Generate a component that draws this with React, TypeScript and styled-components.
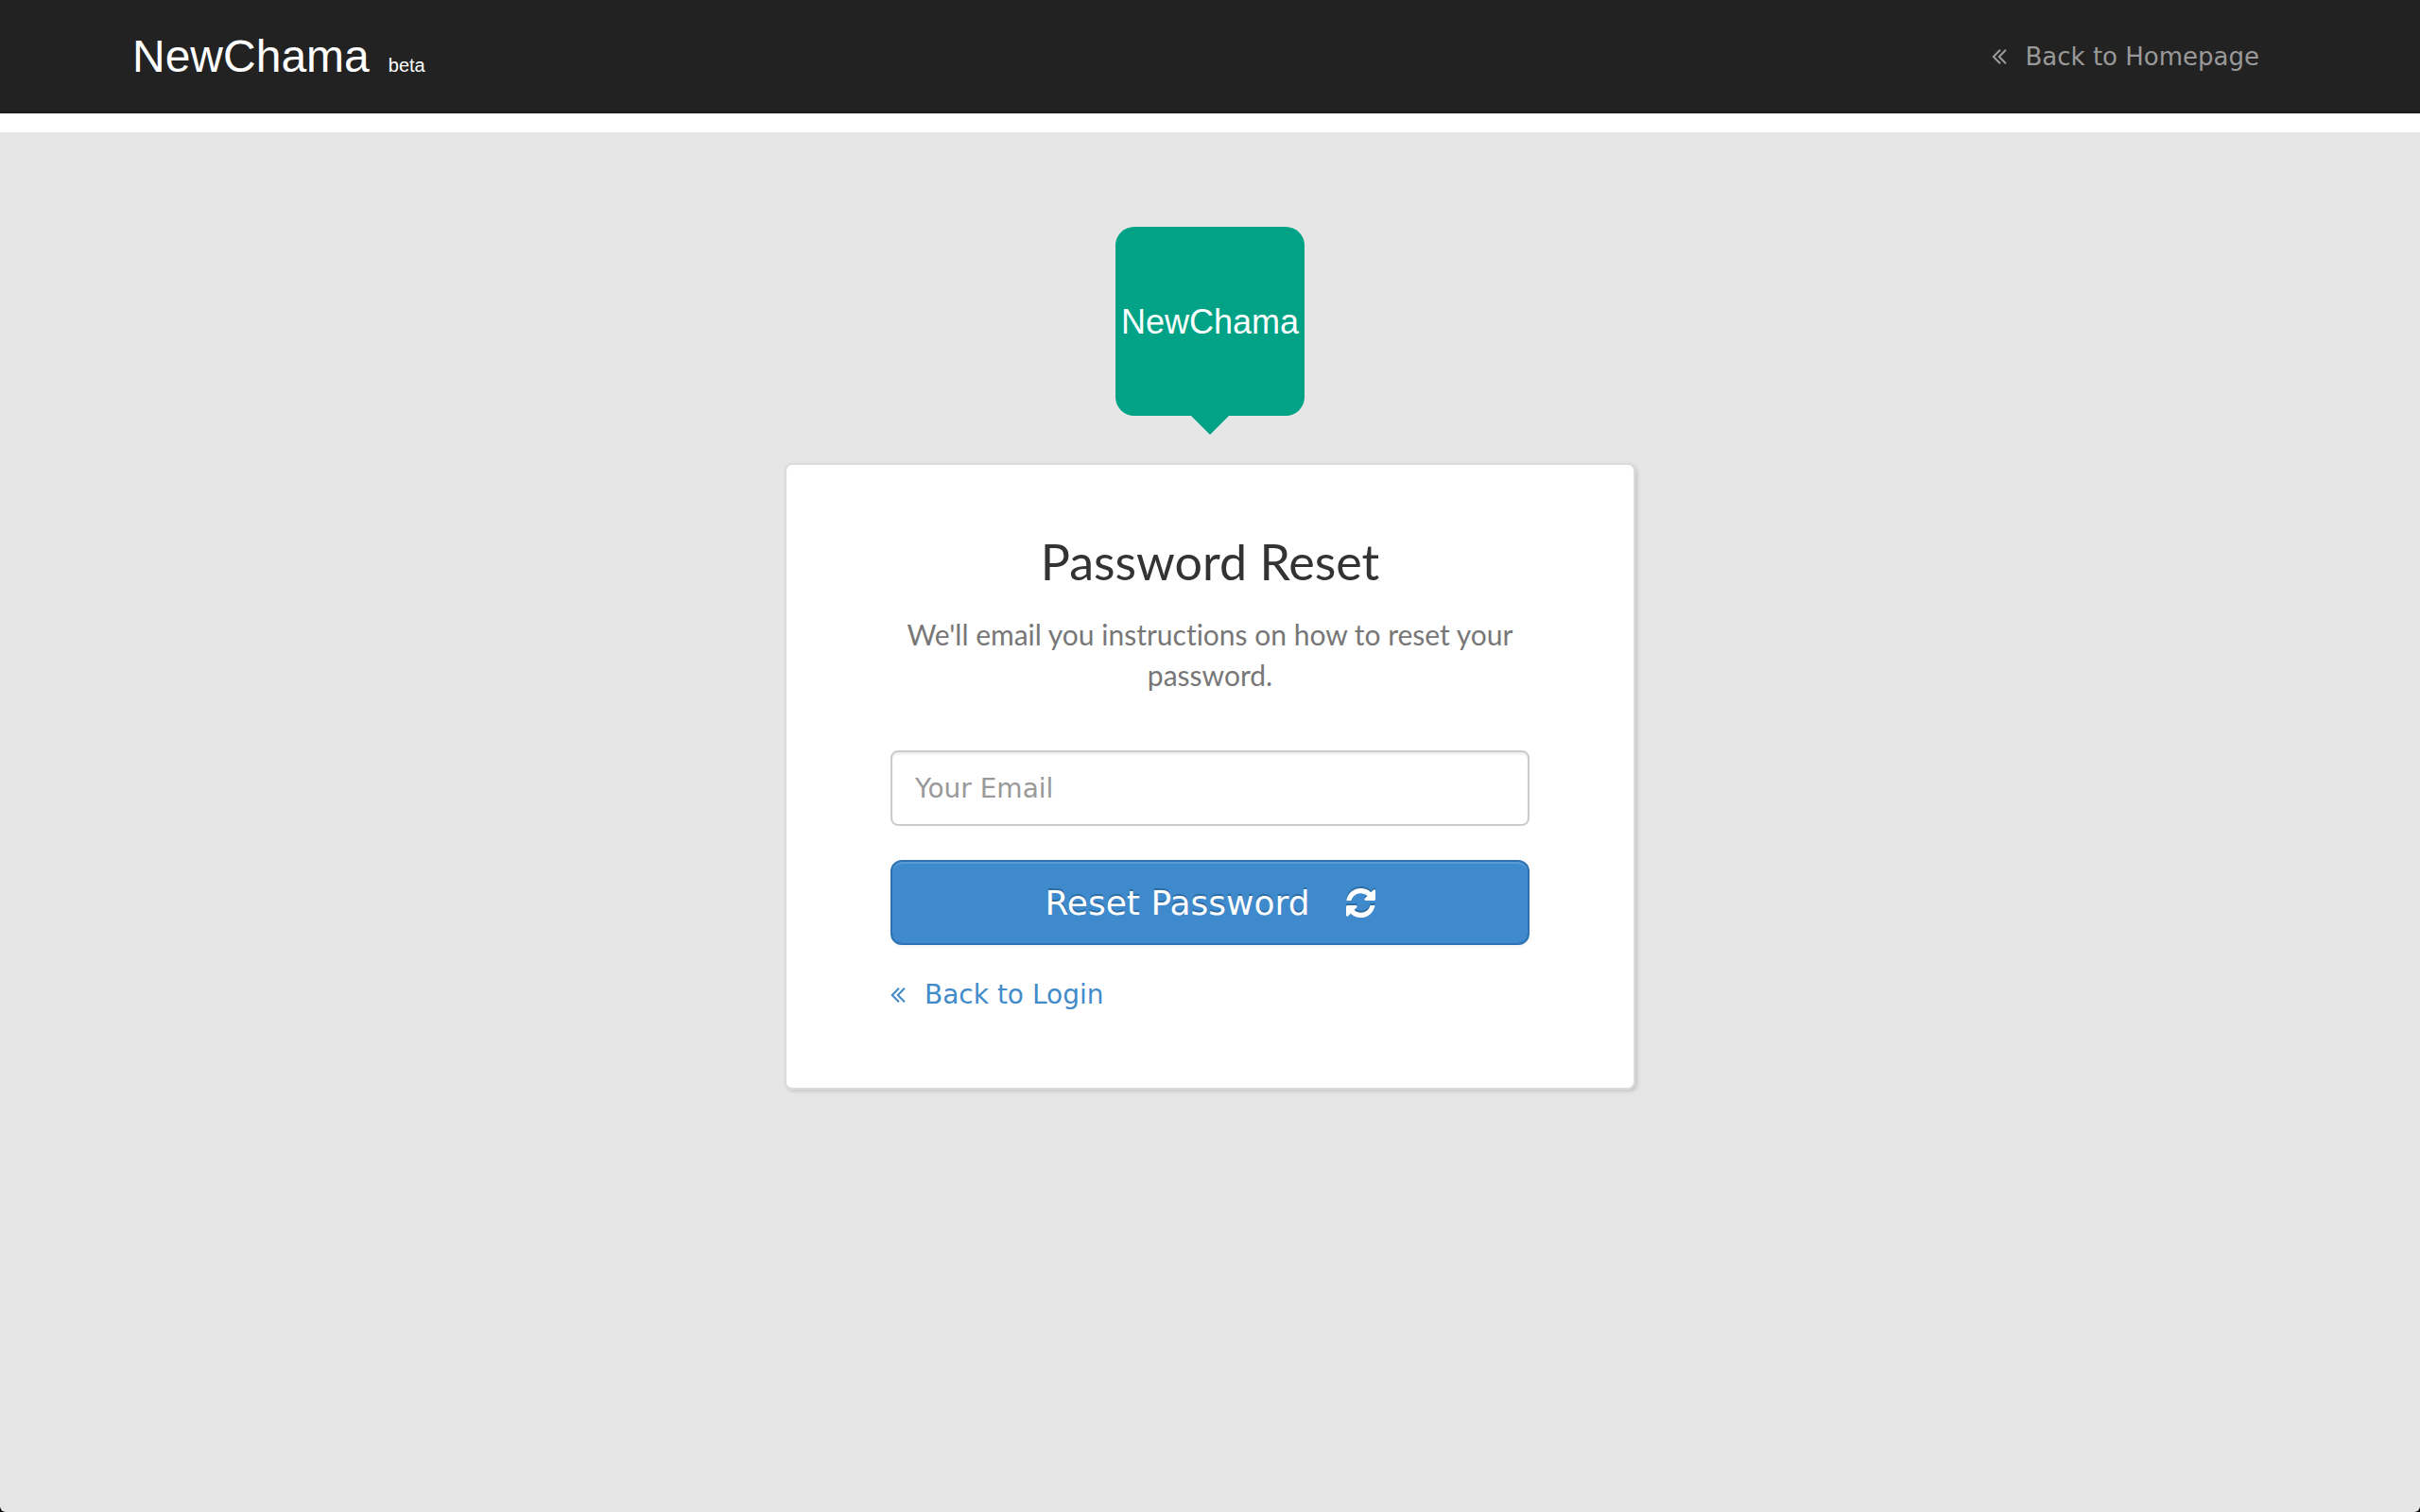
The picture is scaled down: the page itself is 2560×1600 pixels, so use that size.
import React, { useState } from "react";
import styled, { createGlobalStyle } from "styled-components";

const verdana = `Verdana, "DejaVu Sans", sans-serif`;
const helvetica = `"Liberation Sans", Arial, sans-serif`;
const gothic = `"Century Gothic", Lato, sans-serif`;

const GlobalStyle = createGlobalStyle`
  *, *::before, *::after { box-sizing: border-box; }
  html { background: #000; }
  body { margin: 0; font-family: ${verdana}; font-size: 28px; line-height: 40px; color: #333; }
`;

const Page = styled.div`
  min-height: 100vh;
  display: flex;
  flex-direction: column;
  background: #e6e6e6;
  border-radius: 0 0 6px 6px;
`;

const NavBar = styled.header`
  background: #222;
  border-bottom: 2px solid #1c1c1c;
`;

const NavInner = styled.div`
  max-width: 2340px;
  margin: 0 auto;
  padding: 30px 60px 28px 30px;
  display: flex;
  align-items: center;
  justify-content: space-between;
`;

const Brand = styled.a`
  display: flex;
  align-items: baseline;
  gap: 20px;
  font-family: ${helvetica};
  font-size: 48px;
  line-height: 60px;
  color: #fff;
  text-decoration: none;
`;

const Beta = styled.small`
  font-size: 20px;
  line-height: 24px;
`;

const Nav = styled.nav`
  display: flex;
`;

const BackLink = styled.a<{ $muted?: boolean }>`
  display: inline-flex;
  align-items: center;
  gap: 20px;
  font-size: ${(p) => (p.$muted ? 26 : 28)}px;
  line-height: 40px;
  color: ${(p) => (p.$muted ? "#999" : "#428bca")};
  text-decoration: none;
`;

const Strip = styled.div`
  height: 20px;
  background: #fff;
`;

const Main = styled.main`
  flex: 1;
  display: flex;
  flex-direction: column;
  align-items: center;
  padding: 100px 20px;
`;

const Badge = styled.div`
  position: relative;
  width: 200px;
  height: 200px;
  margin-bottom: 50px;
  padding-top: 2px;
  display: flex;
  align-items: center;
  justify-content: center;
  border-radius: 20px;
  background: #01a286;
  color: #fff;
  font-family: ${helvetica};
  font-size: 36px;

  &::after {
    content: "";
    position: absolute;
    top: 100%;
    left: 50%;
    margin-left: -20px;
    border: 20px solid transparent;
    border-top-color: #01a286;
    border-bottom-width: 0;
  }
`;

const Card = styled.section`
  width: 100%;
  max-width: 900px;
  padding: 68px 110px 78px;
  border: 2px solid #dcdcdc;
  border-radius: 8px;
  background: #fff;
  box-shadow: 2px 2px 4px rgba(0, 0, 0, 0.14);
`;

const Title = styled.h1`
  margin: 0 0 22px;
  font-family: ${gothic};
  font-size: 52px;
  font-weight: 400;
  line-height: 68px;
  text-align: center;
`;

const Lead = styled.p`
  margin: 0 0 58px;
  font-family: ${gothic};
  font-size: 30px;
  line-height: 43px;
  font-variant-ligatures: none;
  color: #777;
  text-align: center;
`;

const Form = styled.form`
  display: flex;
  flex-direction: column;
  gap: 36px;
  margin-bottom: 32px;
`;

const EmailInput = styled.input`
  width: 100%;
  height: 80px;
  padding: 0 24px;
  border: 2px solid #ccc;
  border-radius: 8px;
  background: #fff;
  box-shadow: inset 0 2px 2px rgba(0, 0, 0, 0.075);
  font-family: inherit;
  font-size: 28px;
  color: #555;

  &::placeholder { color: #999; opacity: 1; }
`;

const SubmitButton = styled.button`
  display: flex;
  align-items: center;
  justify-content: center;
  gap: 38px;
  width: 100%;
  height: 90px;
  padding: 0 32px;
  border: 2px solid #2d73b3;
  border-radius: 12px;
  background: #3f8acd;
  box-shadow: inset 0 2px 0 rgba(255, 255, 255, 0.15), 0 2px 4px rgba(0, 0, 0, 0.05);
  font-family: inherit;
  font-size: 36px;
  color: #fff;
  text-shadow: 0 -2px 0 #2d6ca2;
  cursor: pointer;
`;

const RefreshSvg = styled.svg`
  width: 31px;
  height: 31px;
  fill: currentColor;
  filter: drop-shadow(0 -2px 0 #2d6ca2);
`;

const AngleSvg = styled.svg`
  width: 16px;
  height: 16px;
  fill: currentColor;
`;

const RefreshIcon = () => (
  <RefreshSvg viewBox="0 0 1536 1536" aria-hidden="true">
    <path d="M1511 928q0 5-1 7-64 268-268 434.500t-478 166.500q-146 0-282.500-55t-243.500-157l-129 129q-19 19-45 19t-45-19-19-45v-448q0-26 19-45t45-19h448q26 0 45 19t19 45-19 45l-137 137q71 66 161 102t187 36q134 0 250-65t186-179q11-17 53-117 8-23 30-23h192q13 0 22.500 9.500t9.500 22.500zm25-800v448q0 26-19 45t-45 19h-448q-26 0-45-19t-19-45 19-45l138-138q-148-137-349-137-134 0-250 65t-186 179q-11 17-53 117-8 23-30 23h-199q-13 0-22.500-9.500t-9.500-22.500v-7q65-268 270-434.500t480-166.500q146 0 284 55.500t245 156.500l130-129q19-19 45-19t45 19 19 45z" />
  </RefreshSvg>
);

const AngleDoubleLeft = () => (
  <AngleSvg viewBox="16 448 1024 1024" aria-hidden="true">
    <path d="M627 1376q0 13-10 23l-50 50q-10 10-23 10t-23-10l-466-466q-10-10-10-23t10-23l466-466q10-10 23-10t23 10l50 50q10 10 10 23t-10 23l-393 393 393 393q10 10 10 23zm384 0q0 13-10 23l-50 50q-10 10-23 10t-23-10l-466-466q-10-10-10-23t10-23l466-466q10-10 23-10t23 10l50 50q10 10 10 23t-10 23l-393 393 393 393q10 10 10 23z" />
  </AngleSvg>
);

export default function App() {
  const [email, setEmail] = useState("");

  return (
    <>
      <GlobalStyle />
      <Page>
        <NavBar>
          <NavInner>
            <Brand href="#home">
              NewChama <Beta>beta</Beta>
            </Brand>
            <Nav>
              <BackLink href="#home" $muted>
                <AngleDoubleLeft />
                Back to Homepage
              </BackLink>
            </Nav>
          </NavInner>
        </NavBar>
        <Strip />
        <Main>
          <Badge>NewChama</Badge>
          <Card>
            <Title>Password Reset</Title>
            <Lead>We'll email you instructions on how to reset your password.</Lead>
            <Form onSubmit={(e) => e.preventDefault()}>
              <EmailInput
                type="email"
                aria-label="Your Email"
                placeholder="Your Email"
                value={email}
                onChange={(e) => setEmail(e.target.value)}
              />
              <SubmitButton type="submit">
                Reset Password
                <RefreshIcon />
              </SubmitButton>
            </Form>
            <BackLink href="#login">
              <AngleDoubleLeft />
              Back to Login
            </BackLink>
          </Card>
        </Main>
      </Page>
    </>
  );
}
